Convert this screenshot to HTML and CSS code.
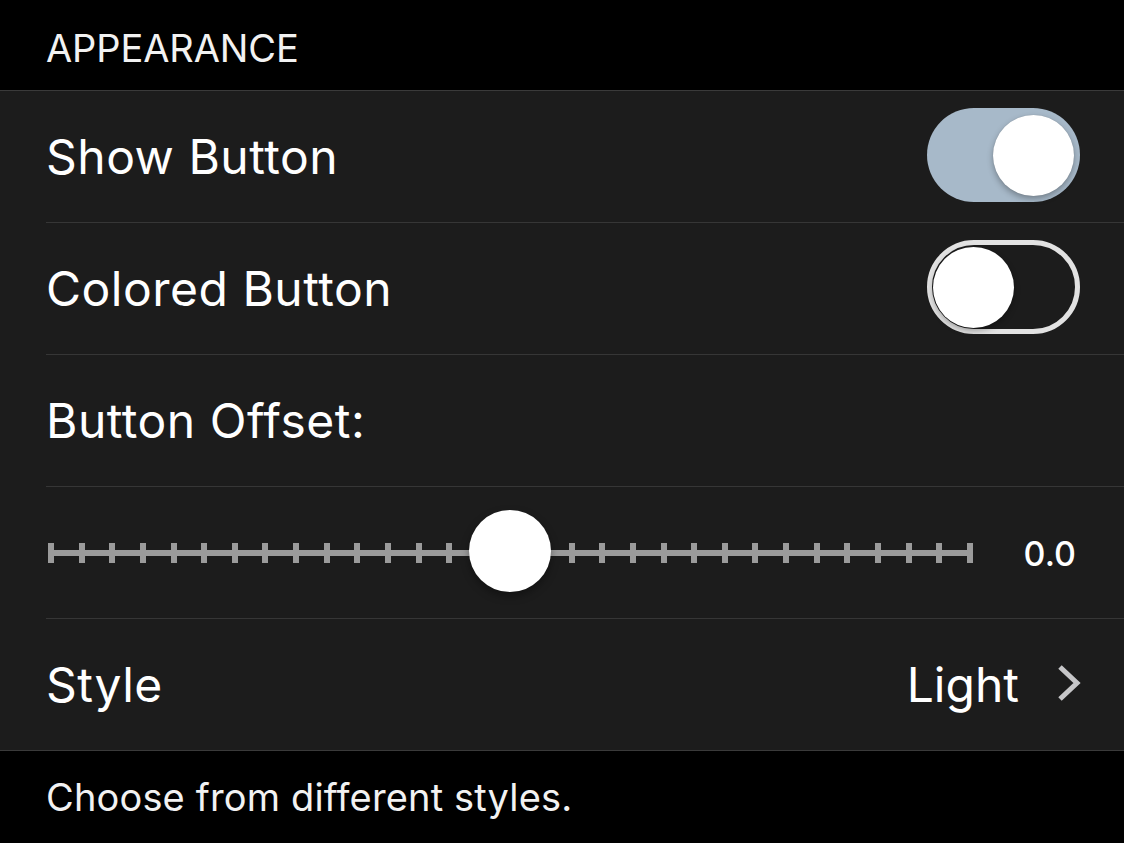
FILE: index.html
```html
<!DOCTYPE html>
<html>
<head>
<meta charset="utf-8">
<link rel="stylesheet" href="styles.css">
</head>
<body>
  <div class="header">APPEARANCE</div>
  <div class="group">
    <div class="row">
      <span class="label">Show Button</span>
      <div class="switch switch-on"><div class="knob"></div></div>
    </div>
    <div class="row">
      <span class="label">Colored Button</span>
      <div class="switch switch-off"><div class="knob"></div></div>
    </div>
    <div class="row">
      <span class="label">Button Offset:</span>
    </div>
    <div class="row slider-row">
      <div class="slider">
        <div class="ticks">
          <i></i><i></i><i></i><i></i><i></i><i></i><i></i><i></i><i></i><i></i>
          <i></i><i></i><i></i><i></i><i></i><i></i><i></i><i></i><i></i><i></i>
          <i></i><i></i><i></i><i></i><i></i><i></i><i></i><i></i><i></i><i></i>
          <i></i>
        </div>
        <div class="thumb"></div>
      </div>
      <span class="value">0.0</span>
    </div>
    <div class="row last">
      <span class="label">Style</span>
      <div class="detail">
        <span class="detail-text">Light</span>
        <svg class="chevron" width="24" height="38" viewBox="0 0 24 38"><polyline points="3,3 20,19 3,35" fill="none" stroke="#c6c6c8" stroke-width="5" stroke-linecap="butt" stroke-linejoin="miter"/></svg>
      </div>
    </div>
  </div>
  <div class="footer">Choose from different styles.</div>
</body>
</html>
```

FILE: styles.css
```css
html, body {
  margin: 0;
  padding: 0;
  background: #000;
}
body {
  font-family: Inter, "Noto Sans", "Liberation Sans", sans-serif;
  color: #fff;
  width: 1124px;
  height: 843px;
  overflow: hidden;
}
.header {
  height: 90px;
  box-sizing: border-box;
  padding: 6px 0 0 46px;
  display: flex;
  align-items: center;
  font-size: 38px;
  letter-spacing: -0.1px;
  color: #f2f2f2;
}
.group {
  background: #1c1c1c;
  border-top: 1px solid #3a3a3a;
  border-bottom: 1px solid #3a3a3a;
  padding-left: 46px;
}
.row {
  height: 131px;
  border-bottom: 1px solid #363636;
  display: flex;
  align-items: center;
  justify-content: space-between;
  padding-right: 44px;
}
.row.last {
  border-bottom: none;
}
.label {
  font-size: 48px;
  letter-spacing: 0.5px;
}
.switch {
  width: 153px;
  height: 94px;
  box-sizing: border-box;
  border-radius: 47px;
  display: flex;
  align-items: center;
  margin-top: -3px;
}
.switch-on {
  background: #a7b9c9;
  justify-content: flex-end;
  padding-right: 6px;
}
.switch-off {
  border: 5px solid #e2e2e2;
  padding-left: 1px;
}
.knob {
  width: 81px;
  height: 81px;
  border-radius: 50%;
  background: #fff;
  box-shadow: 0 3px 6px rgba(0,0,0,0.3), 0 0 1px rgba(0,0,0,0.2);
}
.slider-row {
  padding-left: 2px;
  padding-right: 48px;
}
.slider {
  position: relative;
  width: 925px;
  height: 20px;
}
.ticks {
  height: 20px;
  display: flex;
  justify-content: space-between;
  background: linear-gradient(#9b9b9b, #9b9b9b) center / 100% 6px no-repeat;
}
.ticks i {
  display: block;
  width: 6px;
  height: 20px;
  background: #9b9b9b;
}
.thumb {
  position: absolute;
  left: 421px;
  top: -33px;
  width: 82px;
  height: 82px;
  border-radius: 50%;
  background: #fff;
  box-shadow: 0 4px 8px rgba(0,0,0,0.35);
}
.value {
  font-size: 34px;
  font-weight: 500;
  margin-top: 2px;
}
.detail {
  display: flex;
  align-items: center;
  gap: 38px;
}
.detail-text {
  font-size: 48px;
}
.chevron {
  display: block;
  margin-top: -4px;
  margin-right: -1px;
}
.footer {
  height: 92px;
  box-sizing: border-box;
  padding: 0 0 0 46px;
  display: flex;
  align-items: center;
  font-size: 38px;
  letter-spacing: 0.15px;
  color: #f2f2f2;
}
```
